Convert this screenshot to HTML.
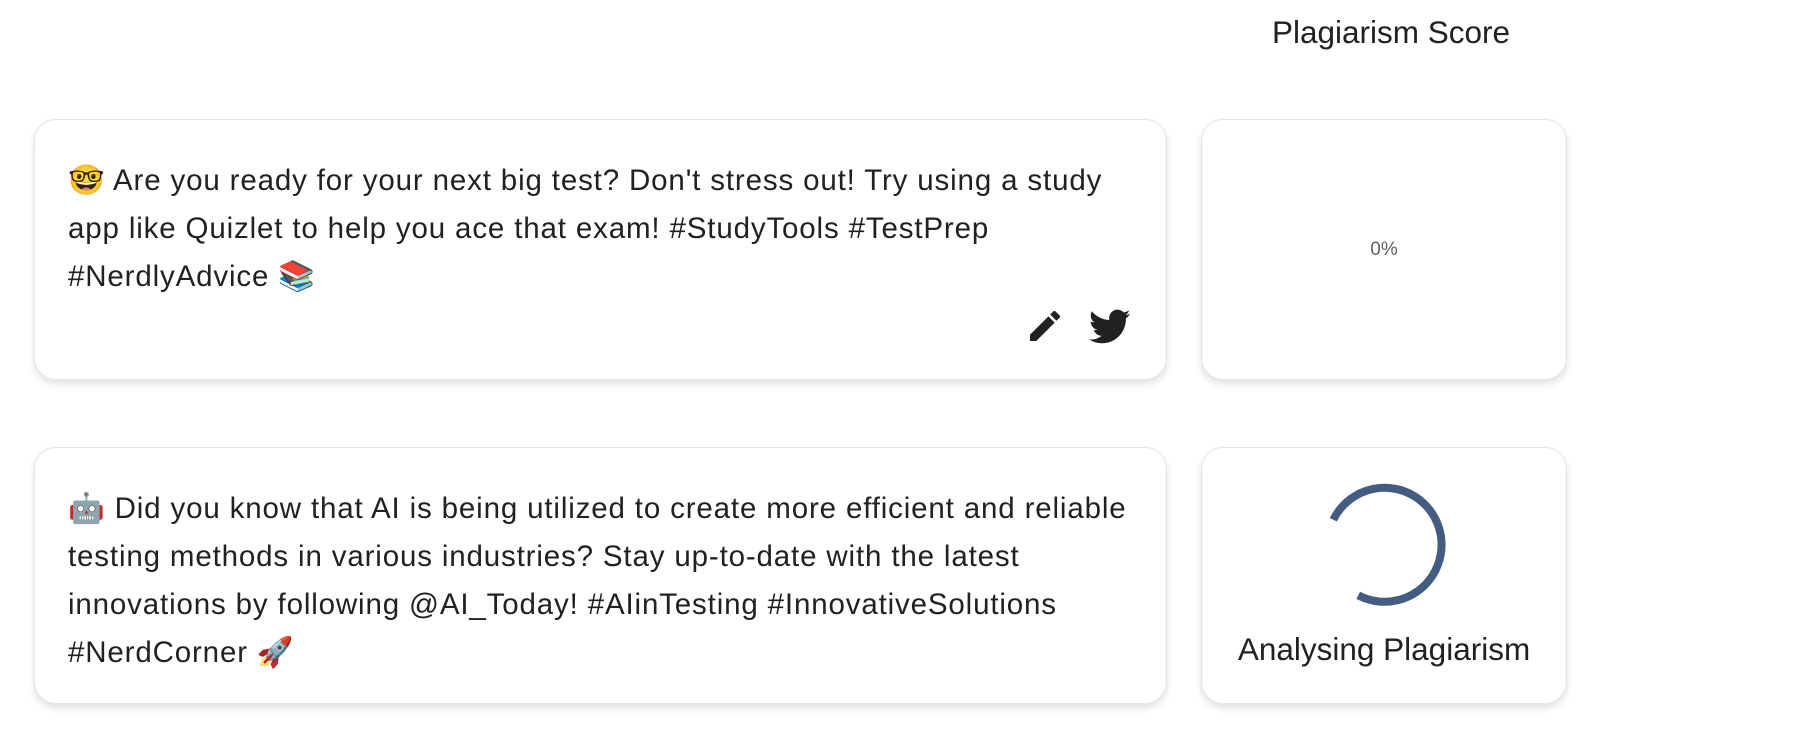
<!DOCTYPE html>
<html><head><meta charset="utf-8"><style>
html,body{margin:0;padding:0;background:#fff;width:1800px;height:754px;overflow:hidden;font-family:"Liberation Sans","Noto Sans CJK JP",sans-serif;color:#212121}
.title{position:absolute;left:1231px;width:320px;top:12px;text-align:center;font-size:31.5px;line-height:40px}
.card{position:absolute;background:#fff;border:1.5px solid #e3e3ea;border-radius:22px;box-shadow:0 4px 8px rgba(0,0,0,.12);box-sizing:border-box}
.txt{position:absolute;left:33px;top:37px;right:0;font-size:29.5px;line-height:48px;white-space:nowrap;letter-spacing:0.85px}
.pct{position:absolute;left:0;right:0;top:119px;text-align:center;font-size:19px;color:#616161}
.lbl{position:absolute;left:0;right:0;top:183px;text-align:center;font-size:31.5px}
</style></head><body>
<div class="title">Plagiarism Score</div>

<div class="card" style="left:34px;top:119px;width:1133px;height:261px">
<div class="txt">🤓 Are you ready for your next big test? Don't stress out! Try using a study<br>app like Quizlet to help you ace that exam! #StudyTools #TestPrep<br>#NerdlyAdvice 📚</div>
<svg style="position:absolute;left:990px;top:186px" width="40" height="40" viewBox="0 0 24 24"><path fill="#212121" d="M3 17.25V21h3.75L17.81 9.94l-3.75-3.75L3 17.25zM20.71 7.04a1 1 0 000-1.41l-2.34-2.34a1 1 0 00-1.41 0l-1.830 1.83 3.75 3.75 1.83-1.83z"/></svg>
<svg style="position:absolute;left:1054px;top:188px" width="42" height="38" viewBox="0 0 24 20"><path fill="#212121" d="M23.6 2.4c-.9.4-1.8.6-2.8.8 1-.6 1.8-1.6 2.1-2.7-.9.6-2 1-3.1 1.2C18.9.7 17.7.1 16.3.1c-2.7 0-4.8 2.2-4.8 4.8 0 .4 0 .8.1 1.1C7.6 5.8 4 3.9 1.6 1 1.2 1.7 1 2.5 1 3.4c0 1.7.9 3.2 2.2 4-.8 0-1.5-.2-2.2-.6v.1c0 2.3 1.7 4.3 3.9 4.7-.4.1-.8.2-1.3.2-.3 0-.6 0-.9-.1.6 1.9 2.4 3.3 4.5 3.4-1.7 1.3-3.7 2.1-6 2.1-.4 0-.8 0-1.2-.1 2.1 1.4 4.7 2.2 7.4 2.2 8.9 0 13.7-7.4 13.7-13.7v-.6c1-.7 1.8-1.5 2.5-2.6z"/></svg>
</div>
<div class="card" style="left:1201px;top:119px;width:366px;height:261px"><div class="pct">0%</div></div>

<div class="card" style="left:34px;top:447px;width:1133px;height:257px">
<div class="txt">🤖 Did you know that AI is being utilized to create more efficient and reliable<br>testing methods in various industries? Stay up-to-date with the latest<br>innovations by following @AI_Today! #AIinTesting #InnovativeSolutions<br>#NerdCorner 🚀</div>
</div>
<div class="card" style="left:1201px;top:447px;width:366px;height:257px">
<svg style="position:absolute;left:0;top:0" width="366" height="180"><path d="M131.3 71.8 A57 57 0 1 1 156.2 147.3" fill="none" stroke="#445c82" stroke-width="8"/></svg>
<div class="lbl">Analysing Plagiarism</div>
</div>
</body></html>
